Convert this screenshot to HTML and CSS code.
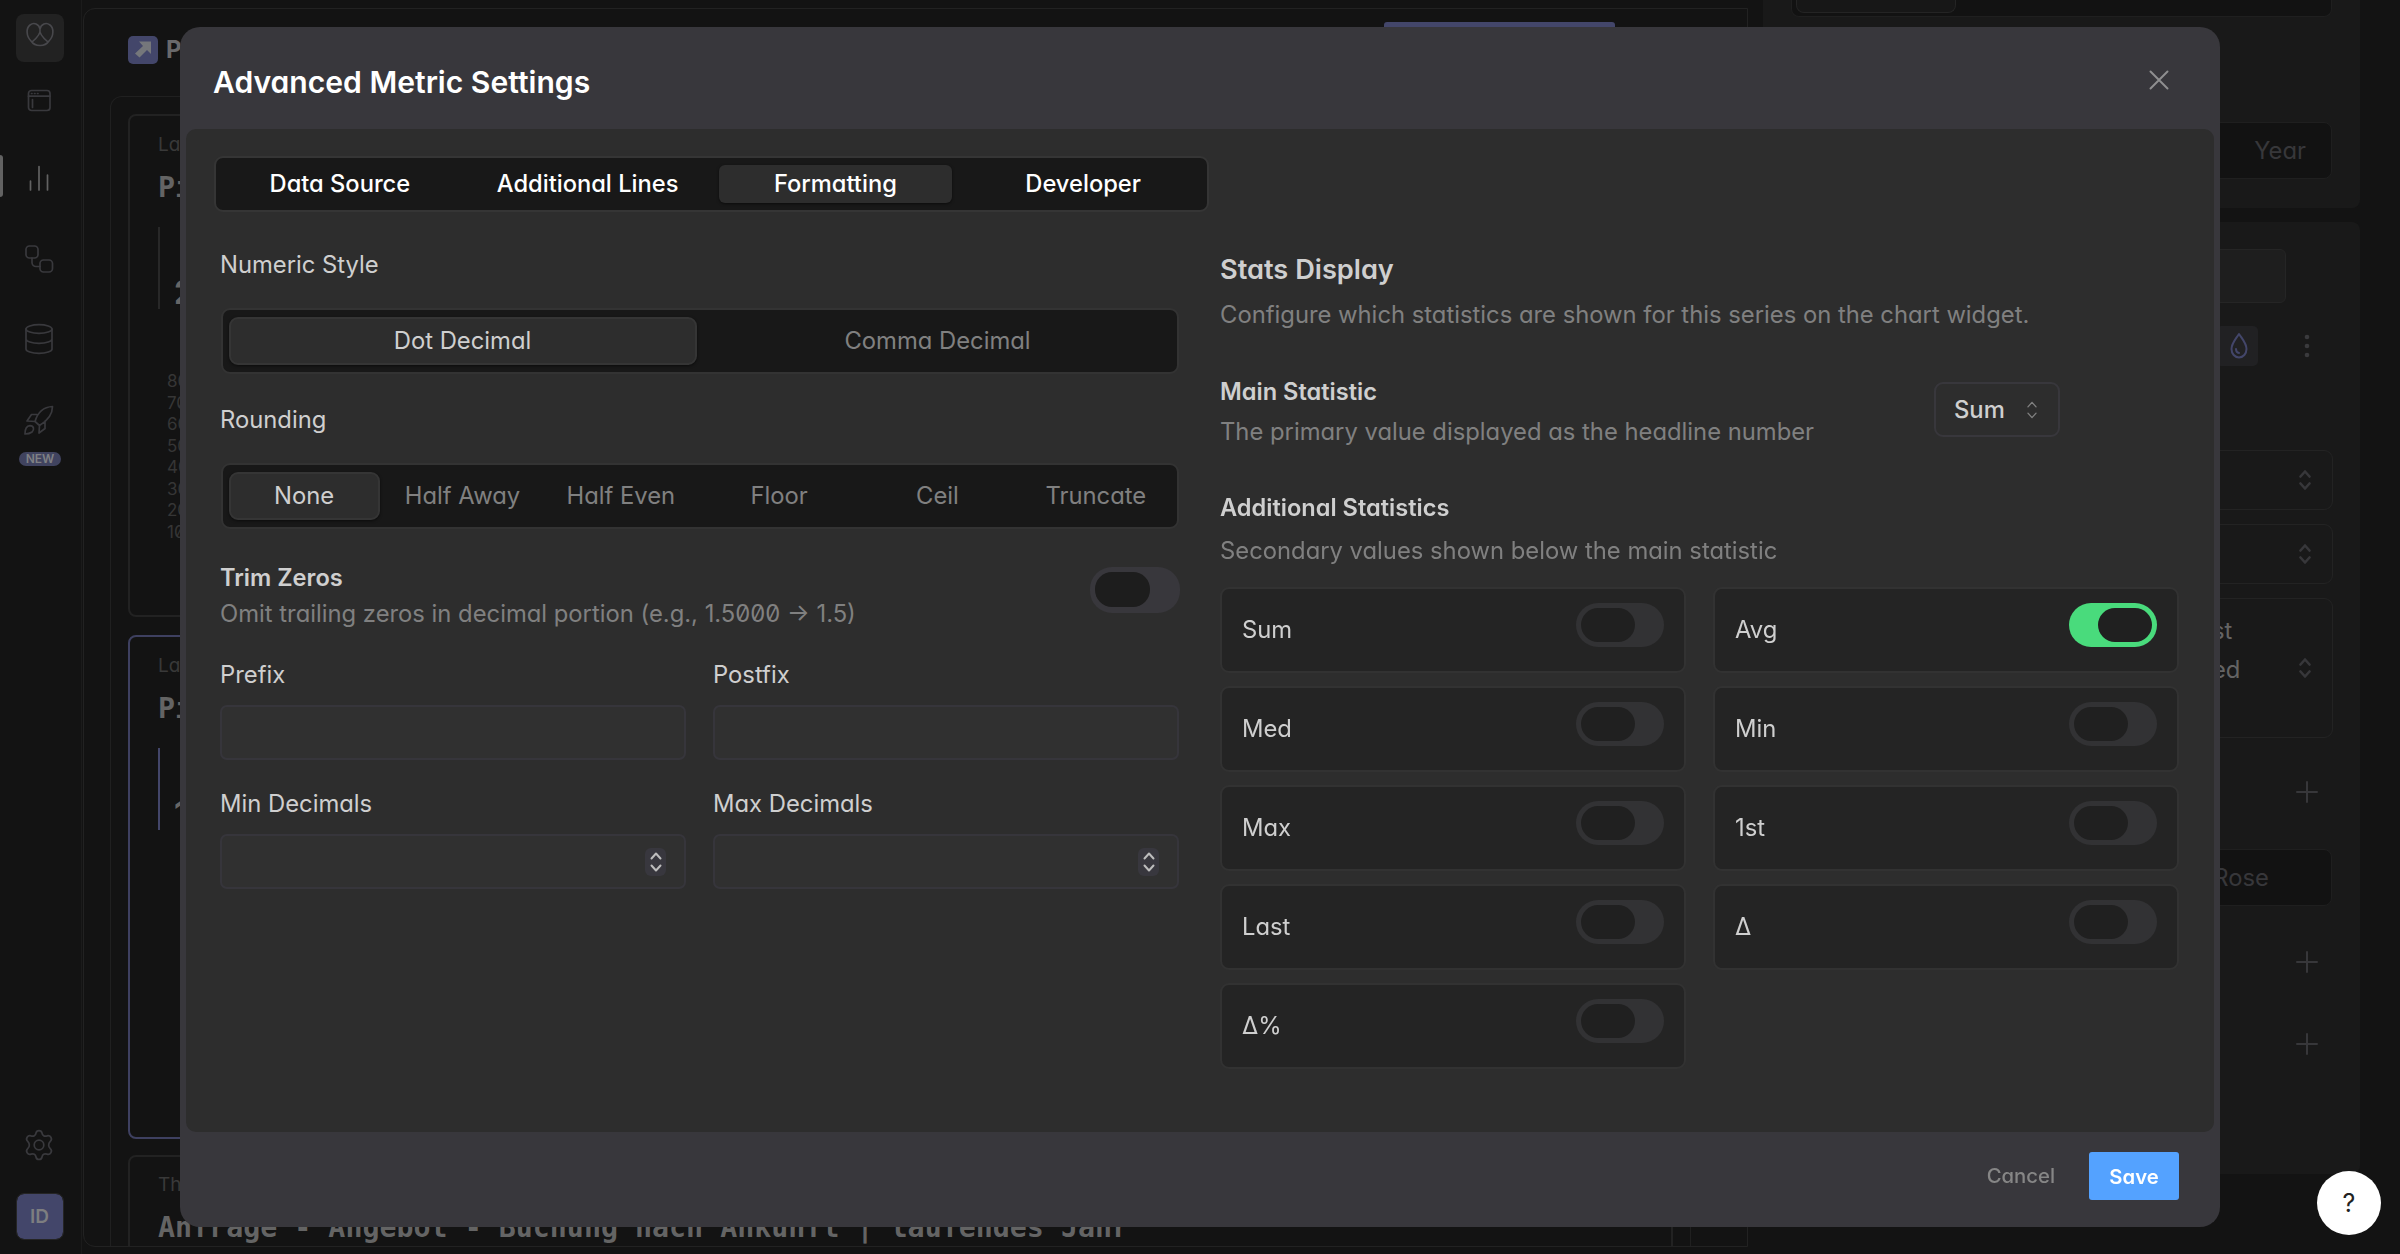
FILE: index.html
```html
<!DOCTYPE html>
<html lang="en">
<head>
<meta charset="utf-8">
<title>Advanced Metric Settings</title>
<link rel="stylesheet" href="styles.css">
</head>
<body>
<svg class="defs" aria-hidden="true">
  <symbol id="updown" viewBox="0 0 12 20"><path d="M1.5 6.5 6 1.5l4.500 5M1.500 13.500 6 18.500l4.500-5"/></symbol>
  <symbol id="plus" viewBox="0 0 22 22"><path d="M11 1v20M1 11h20"/></symbol>
</svg>

<div class="app">
  <nav class="sidebar">
    <div class="logo">
      <svg width="30" height="28" viewBox="0 0 30 28"><path d="M6 20C1 15 1 7 5 4c4-3 9-1 10 4 1 4-2 8-8 13M24 20c5-5 5-13 1-16-4-3-9-1-10 4-1 4 2 8 8 13M6 20c4 6 14 6 18 0"/></svg>
    </div>
    <div class="nav-item"><svg width="24" height="24" viewBox="0 0 24 24"><rect x="1.500" y="1.500" width="21.500" height="20" rx="3"/><path d="M1.500 7.200h21.500M4.500 4.500h.5M7.500 4.500h.5M10.500 4.500h.5M5.500 10.500v8"/></svg></div>
    <div class="nav-item active"><svg width="24" height="26" viewBox="0 0 24 26"><path d="M3.500 16v9M12 1.500V25M20.500 10v15"/></svg></div>
    <div class="nav-item flow"><svg width="30" height="30" viewBox="0 0 30 30"><rect x="2" y="2" width="12" height="12" rx="3.500"/><rect x="16" y="16" width="12.500" height="12" rx="3.500"/><path d="M8 14v4.500a4 4 0 0 0 4 4h4"/></svg></div>
    <div class="nav-item data"><svg width="30" height="32" viewBox="0 0 30 32"><ellipse cx="15" cy="6" rx="13" ry="4.300"/><path d="M2 6v20c0 2.400 5.800 4.300 13 4.300S28 28.400 28 26V6M2 16c0 2.400 5.800 4.300 13 4.300S28 18.400 28 16"/></svg></div>
    <div class="nav-item launch">
      <svg width="32" height="32" viewBox="0 0 32 32"><path d="M12 17.500C14.500 9 20 3 29.500 2.500 29.500 11 24 17 16.500 21.500zM14 10.500H8.500L4 17l8 .500M22 17v7.500l-6 4.500.500-7.500M2 30c0-4.500 1-8 5-8.300 4 0 4.500 4 2 6.300-2 1.500-4 2-7 2z"/></svg>
      <span class="new-badge">NEW</span>
    </div>
    <div class="spacer"></div>
    <div class="nav-item gear"><svg width="32" height="34" viewBox="0 0 32 34"><circle cx="16" cy="17" r="4.800"/><path d="M13 5c.6-3.300 5.400-3.300 6 0 .5 2.800 2.300 3.800 5 2.900 3.200-1.200 6 3 3.300 5.400-2.200 2-2.200 5.400 0 7.400 2.700 2.400-.1 6.600-3.300 5.400-2.700-.9-4.500.1-5 2.900-.6 3.300-5.400 3.300-6 0-.5-2.800-2.300-3.800-5-2.900-3.200 1.200-6-3-3.300-5.400 2.200-2 2.200-5.400 0-7.400C2 10.900 4.800 6.700 8 7.900c2.700.9 4.500-.1 5-2.900z"/></svg></div>
    <div class="avatar">ID</div>
  </nav>

  <main class="main">
    <header class="page-head">
      <svg width="30" height="28" viewBox="0 0 30 28"><rect width="30" height="28" rx="5" fill="#43466a"/><path d="M11 5.500h12V18l-4-4-7.500 7.500-4.500-4 8-7.500z" fill="#75777b"/></svg>
      <b>P</b>
      <span class="primary-edge"></span>
    </header>
    <div class="board">
      <section class="widget">
        <p class="range">Las</p><h3>Pi</h3>
        <div class="reading"><b>2</b></div>
        <ol class="axis"><li>80</li><li>70</li><li>60</li><li>50</li><li>40</li><li>30</li><li>20</li><li>10</li></ol>
      </section>
      <section class="widget selected">
        <p class="range">Las</p><h3>Pi</h3>
        <div class="reading"><b>1</b></div>
      </section>
      <section class="widget last">
        <p class="range">Thi</p><h3>Anfrage - Angebot - Buchung nach Ankunft | laufendes Jahr</h3>
      </section>
    </div>
  </main>

  <aside class="inspector">
    <section class="panel top">
      <div class="bar cut"><span></span></div>
      <div class="bar"><em>Year</em></div>
    </section>
    <section class="panel">
      <div class="field"></div>
      <div class="tools">
        <span class="drop"><svg width="22" height="28" viewBox="0 0 22 28"><path d="M11 2c4 6 7.500 9.500 7.500 15a7.500 8.500 0 0 1-15 0C3.500 11.500 7 8 11 2zM8 17c0 2.500 1.200 3.800 3 4"/></svg></span>
        <svg class="dots" width="6" height="24" viewBox="0 0 6 24"><circle cx="3" cy="3" r="2.300"/><circle cx="3" cy="12" r="2.300"/><circle cx="3" cy="21" r="2.300"/></svg>
      </div>
      <div class="picker"><svg><use href="#updown"/></svg></div>
      <div class="picker"><svg><use href="#updown"/></svg></div>
      <div class="picker tall"><p>st<br>ed</p><svg><use href="#updown"/></svg></div>
      <svg class="add one"><use href="#plus"/></svg>
      <div class="bar rose"><em>Rose</em></div>
      <svg class="add two"><use href="#plus"/></svg>
      <svg class="add three"><use href="#plus"/></svg>
    </section>
  </aside>
</div>

<div class="modal" role="dialog">
  <header class="modal-head">
    <h1>Advanced Metric Settings</h1>
    <svg class="close" width="20" height="20" viewBox="0 0 20 20"><path d="M1.500 1.500l17 17M18.500 1.500l-17 17"/></svg>
  </header>
  <div class="modal-body">
    <div class="tabs"><span>Data Source</span><span>Additional Lines</span><span class="on">Formatting</span><span>Developer</span></div>
    <div class="columns">
      <section class="left">
        <label>Numeric Style</label>
        <div class="segment"><span class="on">Dot Decimal</span><span>Comma Decimal</span></div>
        <label class="rounding">Rounding</label>
        <div class="segment"><span class="on">None</span><span>Half Away</span><span>Half Even</span><span>Floor</span><span>Ceil</span><span>Truncate</span></div>
        <div class="trim">
          <div><h4>Trim Zeros</h4><p>Omit trailing zeros in decimal portion (e.g., 1.5000 → 1.5)</p></div>
          <i class="toggle light"></i>
        </div>
        <div class="inputs">
          <div><label>Prefix</label><div class="input"></div></div>
          <div><label>Postfix</label><div class="input"></div></div>
          <div><label>Min Decimals</label><div class="input"><span class="stepper"><svg><use href="#updown"/></svg></span></div></div>
          <div><label>Max Decimals</label><div class="input"><span class="stepper"><svg><use href="#updown"/></svg></span></div></div>
        </div>
      </section>
      <section class="right">
        <h2>Stats Display</h2>
        <p>Configure which statistics are shown for this series on the chart widget.</p>
        <div class="main-stat">
          <div><h4>Main Statistic</h4><p>The primary value displayed as the headline number</p></div>
          <div class="select">Sum<svg><use href="#updown"/></svg></div>
        </div>
        <h4 class="additional">Additional Statistics</h4>
        <p class="secondary">Secondary values shown below the main statistic</p>
        <div class="stats">
          <div class="stat">Sum<i class="toggle"></i></div>
          <div class="stat">Avg<i class="toggle checked"></i></div>
          <div class="stat">Med<i class="toggle"></i></div>
          <div class="stat">Min<i class="toggle"></i></div>
          <div class="stat">Max<i class="toggle"></i></div>
          <div class="stat">1st<i class="toggle"></i></div>
          <div class="stat">Last<i class="toggle"></i></div>
          <div class="stat">Δ<i class="toggle"></i></div>
          <div class="stat">Δ%<i class="toggle"></i></div>
        </div>
      </section>
    </div>
  </div>
  <footer class="modal-foot"><span>Cancel</span><button>Save</button></footer>
</div>
<div class="help">?</div>
</body>
</html>
```
FILE: styles.css
```css
* { box-sizing: border-box; }
body {
  margin: 0;
  overflow: hidden;
  background: #131313;
  font: 400 23.8px/30px Inter, sans-serif;
  font-feature-settings: "cv11", "zero";
  color: #cfcfcf;
}
h1, h2, h3, h4, p, ol { margin: 0; padding: 0; }
svg { display: block; fill: none; stroke: currentColor; stroke-width: 2; stroke-linecap: round; stroke-linejoin: round; }
.defs { position: absolute; width: 0; height: 0; }

/* Dimmed application behind the dialog */
.app { display: flex; height: 1254px; overflow: hidden; }
.sidebar {
  width: 82px; padding: 14px 0 15px; flex: none;
  display: flex; flex-direction: column; align-items: center;
  border-right: 1px solid #1b1b1b; color: #39393d;
}
.logo { width: 48px; height: 48px; margin-right: 1px; border-radius: 8px; background: #222; display: grid; place-items: center; padding-bottom: 6px; color: #48484c; }
.logo svg { stroke-width: 1.6; }
.nav-item { position: relative; width: 100%; height: 77px; display: grid; place-items: center; padding-right: 3px; }
.nav-item svg { stroke-width: 1.7; }
.nav-item.active { color: #626262; }
.nav-item.active::before { content: ""; position: absolute; left: 0; top: 16px; width: 3px; height: 42px; background: #626262; border-radius: 0 4px 4px 0; }
.nav-item.flow { height: 86px; }
.nav-item.data { height: 73px; }
.nav-item.launch { height: 90px; }
.nav-item.gear { height: 62px; margin-bottom: 18px; }
.new-badge { position: absolute; left: 19px; top: 77px; width: 42px; height: 14px; border-radius: 7px; background: #40435f; color: #7f8083; font-size: 12px; font-weight: 600; line-height: 14px; text-align: center; }
.spacer { flex: 1; }
.avatar { width: 46px; height: 45px; margin-right: 2px; border-radius: 7px; background: #43466a; outline: 1px solid #252525; color: #7d7e80; font-size: 19px; font-weight: 600; display: grid; place-items: center; }

.main { width: 1665px; height: 1239px; margin: 8px 0 0 1px; flex: none; border: 1px solid #222; border-radius: 12px 0 0 12px; overflow: hidden; display: flex; flex-direction: column; }
.page-head { height: 87px; flex: none; display: flex; gap: 8px; padding: 27px 0 0 44px; color: #69696b; font-size: 24px; line-height: 28px; }
.page-head svg { stroke: none; }
.primary-edge { width: 231px; height: 20px; margin: -14px 132px 0 auto; background: #43466a; border-radius: 3px; }
.board { flex: 1; min-height: 0; margin: 0 56px 0 26px; padding: 17px; border: 1px solid #202020; border-bottom: 0; border-radius: 12px 12px 0 0; }
.widget { height: 503px; margin-bottom: 18px; padding: 17px 28px; border: 2px solid #222; border-radius: 8px; }
.widget.selected { height: 504px; margin-bottom: 16px; border-color: #3e4060; }
.widget.last { padding-top: 16px; }
.range { color: #393939; font-size: 19px; line-height: 24px; }
.widget h3 { margin-top: 13px; color: #646464; font: 700 28.3px/36px "DejaVu Sans Mono", monospace; white-space: pre; }
.reading { height: 82px; margin-top: 21px; padding: 49px 0 0 14px; border-left: 2px solid #282828; color: #666; font-size: 32px; line-height: 34px; }
.selected .reading { border-color: #43466a; }
.axis { list-style: none; padding: 62px 0 0 9px; color: #363636; font-size: 17px; line-height: 21.5px; }

.inspector { flex: none; width: 597px; margin-left: 15px; }
.panel { height: 952px; margin-bottom: 14px; padding: 27px 0 0 28px; background: #191919; border-radius: 8px; }
.panel.top { height: 208px; padding: 0 0 0 28px; border-radius: 0 0 8px 8px; }
.bar { width: 541px; height: 57px; background: #121212; border: 1px solid #1f1f1f; border-radius: 8px; color: #37373a; display: flex; align-items: center; justify-content: flex-end; }
.bar em { font-style: normal; margin-right: 25px; }
.bar.cut { height: 17px; margin-bottom: 105px; border-top: 0; border-radius: 0 0 8px 8px; justify-content: flex-start; }
.bar.cut span { width: 160px; height: 13px; margin: -4px 0 0 4px; border: 1px solid #242424; border-top: 0; border-radius: 0 0 8px 8px; background: #171717; }
.field { width: 495px; height: 54px; border: 1px solid #252525; border-radius: 6px; background: #1e1e1e; }
.tools { display: flex; align-items: center; justify-content: flex-end; width: 519px; margin: 23px 0 84px; gap: 46px; }
.drop { width: 42px; height: 40px; padding-left: 4px; border-radius: 5px; background: #212123; display: grid; place-items: center; color: #43466a; }
.dots { fill: #3a3a3d; stroke: none; }
.picker { width: 542px; height: 60px; margin-bottom: 14px; padding: 0 21px; border: 1px solid #232323; border-radius: 9px; display: flex; align-items: center; justify-content: flex-end; color: #37373a; }
.picker svg { width: 12px; height: 20px; stroke-width: 2.6; }
.picker.tall { height: 140px; color: #646464; }
.picker.tall p { width: 106px; line-height: 39px; padding: 0 0 37px 19px; }
.picker.tall svg { color: #37373a; }
.add { width: 22px; height: 22px; margin-left: 505px; color: #37373a; }
.add.one { margin-top: 43px; }
.bar.rose { margin: 46px 0 0; }
.bar.rose em { margin-right: 62px; }
.add.two { margin-top: 45px; }
.add.three { margin-top: 60px; }

/* Dialog */
.modal { position: fixed; left: 180px; top: 27px; width: 2040px; height: 1200px; padding: 0 6px; border-radius: 20px; background: #38373c; display: flex; flex-direction: column; }
.modal-head { height: 102px; padding: 0 45px 0 27px; display: flex; align-items: center; justify-content: space-between; }
.modal-head h1 { margin-top: 7px; color: #fff; font-size: 30.1px; font-weight: 600; line-height: 36px; }
.close { color: #8f8f90; margin-top: 4px; }
.modal-body { height: 1003px; padding: 27px 35px 0 29px; border-radius: 10px; background: #2d2d2d; }
.tabs { width: 995px; height: 56px; margin-left: -1px; padding: 7px 0; border: 2px solid #353535; border-radius: 9px; background: #181818; display: flex; color: #fff; font-weight: 500; font-size: 23.7px; }
.tabs span { flex: 1; margin: 0 7px; border-radius: 6px; display: grid; place-items: center; }
.tabs .on { background: #2d2d2d; box-shadow: 0 1px 3px #0008; }
.columns { display: grid; grid-template-columns: 960px 959px; gap: 40px; padding-left: 5px; }
label { display: block; }
.left { padding-top: 38px; }
.left p, .right p { color: #808080; white-space: nowrap; }
h4 { font-size: 23.6px; font-weight: 600; }
.segment { width: 958px; height: 66px; margin: 28px 0 30px 1px; padding: 7px 2px; border: 2px solid #333; border-radius: 9px; background: #181818; display: flex; color: #808080; }
.segment span { flex: 1; margin: 0 3.5px; display: grid; place-items: center; border: 2px solid transparent; border-radius: 9px; }
.segment .on { background: #2d2d2d; border-color: #353535; color: #cfcfcf; box-shadow: 0 1px 3px #0008; }
.rounding { padding-top: 1px; }
.trim { display: flex; justify-content: space-between; padding-top: 1px; }
.trim h4, .trim p { line-height: 36px; }
.trim .toggle { margin-top: 7px; }
.inputs { display: grid; grid-template-columns: 466px 466px; gap: 29px 27px; padding-top: 28px; }
.input { height: 55px; margin-top: 15px; padding-right: 18px; border: 2px solid #36353b; border-radius: 7px; background: #303030; display: flex; align-items: center; justify-content: flex-end; }
.stepper { width: 21px; height: 28px; border-radius: 6px; background: #38373e; color: #bdbdbd; display: grid; place-items: center; }
.stepper svg { width: 12px; height: 20px; }
.right { padding-top: 41px; }
.right h2 { font-size: 27.2px; font-weight: 600; line-height: 34px; margin-bottom: 13px; }
.main-stat { width: 840px; margin: 47px 0 46px; display: flex; justify-content: space-between; }
.main-stat p { margin-top: 10px; }
.select { width: 126px; height: 55px; margin-top: 5px; padding: 0 20px 0 18px; border: 2px solid #38373c; border-radius: 9px; display: flex; align-items: center; justify-content: space-between; font-weight: 500; }
.select svg { width: 12px; height: 18px; color: #808080; stroke-width: 1.5; }
.secondary { margin: 13px 0 21px; }
.stats { display: grid; grid-template-columns: 466px 466px; gap: 13px 27px; }
.stat { height: 86px; padding: 14px 20px; border: 2px solid #323232; border-radius: 9px; background: #242424; display: flex; justify-content: space-between; line-height: 54px; }
.toggle { width: 88px; height: 44px; padding: 5px; border-radius: 22px; background: #323234; }
.toggle::before { content: ""; display: block; width: 54px; height: 34px; border-radius: 17px; background: #202020; }
.toggle.light { width: 90px; height: 46px; background: #38373c; }
.toggle.light::before { width: 55px; height: 35px; background: #1d1d1d; }
.toggle.checked { background: #49db7c; }
.toggle.checked::before { margin-left: 24px; }
.modal-foot { flex: 1; padding: 20px 35px 0 0; display: flex; justify-content: flex-end; gap: 34px; color: #868686; font-size: 20.3px; font-weight: 500; line-height: 48px; }
.modal-foot button { width: 90px; height: 48px; padding: 0; border: 0; border-radius: 3px; background: #54a2ff; color: #fff; font: 600 20.3px Inter, sans-serif; font-feature-settings: "cv11"; }
.help { position: fixed; left: 2317px; top: 1171px; width: 64px; height: 64px; border-radius: 50%; background: #fff; color: #222; display: grid; place-items: center; font-size: 25px; }
```
